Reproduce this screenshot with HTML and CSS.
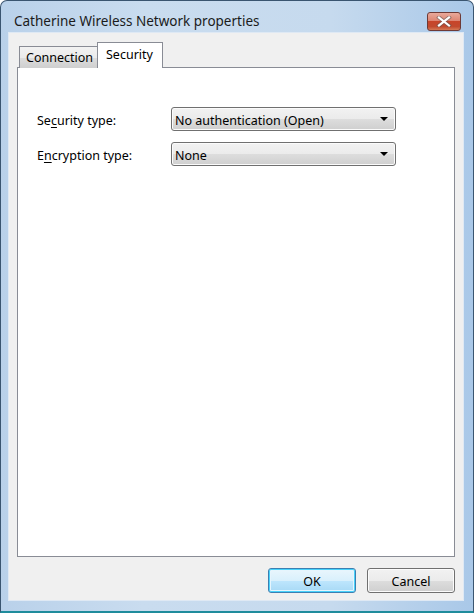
FILE: index.html
```html
<!DOCTYPE html>
<html>
<head>
<meta charset="utf-8">
<link rel="stylesheet" href="styles.css">
</head>
<body>
<div class="window">
  <div class="titlebar">
    <span class="title">Catherine Wireless Network properties</span>
    <div class="close">
      <svg width="16" height="11" viewBox="0 0 16 11">
        <path d="M3 1.5 L13 9.5 M13 1.5 L3 9.5" stroke="#5a5a5a" stroke-width="4" stroke-linecap="square" opacity="0.55"/>
        <path d="M3 1.5 L13 9.5 M13 1.5 L3 9.5" stroke="#ffffff" stroke-width="2.2" stroke-linecap="square"/>
      </svg>
    </div>
  </div>
  <div class="client">
    <div class="tabs">
      <div class="tab">Connection</div>
      <div class="tab active">Security</div>
    </div>
    <div class="panel">
      <div class="row">
        <span class="label">Se<u>c</u>urity type:</span>
        <div class="combo">
          <span class="value">No authentication (Open)</span>
          <svg class="arrow" width="8" height="4" viewBox="0 0 8 4"><path d="M0 0 H8 L4 4 Z" fill="#000"/></svg>
        </div>
      </div>
      <div class="row">
        <span class="label">E<u>n</u>cryption type:</span>
        <div class="combo">
          <span class="value">None</span>
          <svg class="arrow" width="8" height="4" viewBox="0 0 8 4"><path d="M0 0 H8 L4 4 Z" fill="#000"/></svg>
        </div>
      </div>
    </div>
    <div class="buttons">
      <div class="btn default">OK</div>
      <div class="btn">Cancel</div>
    </div>
  </div>
</div>
</body>
</html>
```

FILE: styles.css
```css
html, body {
  margin: 0;
  padding: 0;
  background: #ffffff;
}
body {
  font-family: "Noto Sans", "Open Sans", sans-serif;
  font-size: 12.5px;
  color: #000;
}
.window {
  width: 474px;
  height: 613px;
  box-sizing: border-box;
  border: 1px solid #3a5570;
  border-bottom: 2px solid #1f8c9c;
  border-radius: 7px 7px 0 0;
  background: linear-gradient(to right, #b9d1ea 0%, #c9dcef 30%, #c6daee 70%, #a9c8e8 100%);
  padding: 0 9px 10px 7px;
  display: flex;
  flex-direction: column;
}
.titlebar {
  height: 31px;
  flex: none;
  display: flex;
  align-items: center;
  position: relative;
}
.title {
  margin-left: 6px;
  margin-top: 9px;
  font-size: 13.5px;
  color: #1b1b1b;
}
.close {
  position: absolute;
  right: 3px;
  top: 11px;
  width: 34px;
  height: 19px;
  box-sizing: border-box;
  border: 1px solid #6e3a36;
  border-radius: 3px;
  background: linear-gradient(to bottom, #e9a99b 0%, #dd8673 45%, #c7452a 50%, #c24a2e 80%, #d47a56 100%);
  display: flex;
  align-items: center;
  justify-content: center;
}
.client {
  flex: 1;
  border: 1px solid #dfe9f4;
  background: #f0f0f0;
  display: flex;
  flex-direction: column;
  padding: 9px 8px 7px 8px;
}
.tabs {
  display: flex;
  align-items: flex-end;
  height: 26px;
  flex: none;
  margin-bottom: -1px;
  position: relative;
  z-index: 1;
  padding-left: 2px;
}
.tab {
  box-sizing: border-box;
  height: 22px;
  padding: 0 6px;
  border: 1px solid #898c95;
  border-bottom: none;
  background: linear-gradient(to bottom, #f2f2f2 0%, #ebebeb 50%, #dddddd 51%, #cfcfcf 100%);
  display: flex;
  align-items: center;
  color: #000;
  width: 79px;
}
.tab.active {
  height: 26px;
  background: #ffffff;
  width: 66px;
  margin-left: -1px;
  padding: 0 0 3px 8px;
}
.panel {
  flex: 1;
  background: #ffffff;
  border: 1px solid #898c95;
  padding: 39px 0 0 19px;
  display: flex;
  flex-direction: column;
  gap: 11px;
}
.row {
  display: flex;
  align-items: center;
  height: 24px;
}
.label {
  width: 134px;
  flex: none;
  padding-top: 2px;
}
.label u {
  text-decoration-thickness: 1px;
  text-underline-offset: 2px;
}
.combo {
  width: 225px;
  height: 24px;
  box-sizing: border-box;
  border: 1px solid #707070;
  border-radius: 3px;
  background: linear-gradient(to bottom, #f2f2f2 0%, #ebebeb 50%, #dddddd 51%, #cfcfcf 100%);
  box-shadow: inset 0 0 0 1px #fbfbfb;
  display: flex;
  align-items: center;
  justify-content: space-between;
  padding: 0 7px 0 3px;
}
.value {
  padding-top: 2px;
}
.buttons {
  display: flex;
  justify-content: flex-end;
  gap: 11px;
  margin-top: 11px;
  flex: none;
}
.btn {
  width: 88px;
  height: 25px;
  box-sizing: border-box;
  border: 1px solid #707070;
  border-radius: 3px;
  background: linear-gradient(to bottom, #f2f2f2 0%, #ebebeb 50%, #dddddd 51%, #cfcfcf 100%);
  box-shadow: inset 0 0 0 1px #fcfcfc;
  display: flex;
  align-items: center;
  justify-content: center;
  padding-top: 2px;
}
.btn.default {
  border-color: #3c7fb1;
  background: linear-gradient(to bottom, #eaf6fd 0%, #d9f0fc 50%, #bee6fd 51%, #a7d9f5 100%);
  box-shadow: inset 0 0 0 1px #48d2fb, inset 0 0 0 2px #e6f5fd;
}
```
